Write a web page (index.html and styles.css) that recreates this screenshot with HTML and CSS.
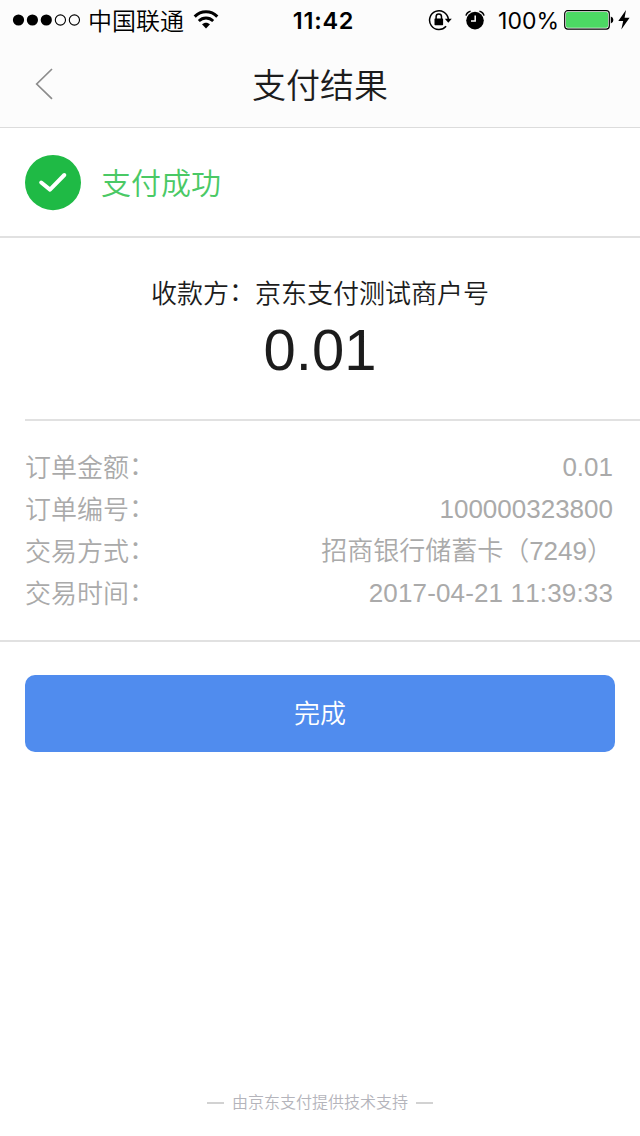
FILE: index.html
```
<!DOCTYPE html>
<html lang="zh-CN">
<head>
  <meta charset="UTF-8">
  <meta name="viewport" content="width=device-width, initial-scale=1.0">
  <title>支付结果</title>
  <link rel="stylesheet" href="styles.css">
</head>
<body>
  <div class="status-bar">
    <div class="status-left">
      <svg class="signal" width="70" height="14" viewBox="0 0 70 14">
        <circle cx="6.5" cy="7" r="5.6"/>
        <circle cx="20.4" cy="7" r="5.6"/>
        <circle cx="34.3" cy="7" r="5.6"/>
        <circle class="empty" cx="48.4" cy="7" r="5.1"/>
        <circle class="empty" cx="62.4" cy="7" r="5.1"/>
      </svg>
      <span class="carrier">中国联通</span>
      <svg class="wifi" width="26" height="20" viewBox="0 0 26 20">
        <path d="M1.7 6.6C8 .2 18 .2 24.3 6.6" fill="none" stroke="#000" stroke-width="3"/>
        <path d="M5.8 11C9.9 7 16.1 7 20.2 11" fill="none" stroke="#000" stroke-width="2.8"/>
        <path d="M9 14.3C11.3 12.1 14.7 12.1 17 14.3L13 18.4Z"/>
      </svg>
    </div>
    <span class="time">11:42</span>
    <div class="status-right">
      <svg class="lock" width="24" height="22" viewBox="0 0 24 22">
        <path d="M18.1 17.3A9.4 9.4 0 1 1 20.3 10" fill="none" stroke="#000" stroke-width="1.5"/>
        <path d="M16.8 9.7H23.8L20.3 13.8Z"/>
        <rect x="6.5" y="9.4" width="8.6" height="6.8" rx=".6"/>
        <path d="M8.1 10V7.8A2.7 2.7 0 0 1 13.5 7.8V10" fill="none" stroke="#000" stroke-width="1.5"/>
      </svg>
      <svg class="alarm" width="20" height="20" viewBox="0 0 20 20">
        <circle cx="10" cy="10.6" r="8.8"/>
        <path d="M1 5.6Q1.7 2.3 5.6 1.3M19 5.6Q18.3 2.3 14.4 1.3" fill="none" stroke="#000" stroke-width="1.5"/>
        <path d="M10.2 5.4V11H6" fill="none" stroke="#fff" stroke-width="1.5"/>
      </svg>
      <span class="percent">100%</span>
      <svg class="battery" width="50" height="20" viewBox="0 0 50 20">
        <rect x=".7" y=".7" width="44.6" height="18.4" rx="3" fill="#fff" stroke="#000" stroke-width="1.2"/>
        <rect x="2" y="2" width="42" height="15.8" rx="1.8" fill="#4cd964"/>
        <path d="M46.8 6.6Q49.4 7.2 49.4 10Q49.4 12.8 46.8 13.4Z"/>
      </svg>
      <svg class="bolt" width="12" height="20" viewBox="0 0 12 20">
        <path d="M8 0L.3 11H5.2L3.3 19.4L11.6 7.8H6.6Z"/>
      </svg>
    </div>
  </div>

  <header class="nav">
    <svg class="back" width="20" height="34" viewBox="0 0 20 34">
      <path d="M17 2L1.7 17L17 31.8" fill="none" stroke="#8c8c8c" stroke-width="1.7"/>
    </svg>
    <h1>支付结果</h1>
  </header>

  <section class="result">
    <svg width="56" height="56" viewBox="0 0 56 56">
      <ellipse cx="28" cy="27.6" rx="28" ry="27.6" fill="#1fba45"/>
      <path d="M16.2 27.5L25 34.6L39.3 20" fill="none" stroke="#fff" stroke-width="4" stroke-linecap="round" stroke-linejoin="round"/>
    </svg>
    <span>支付成功</span>
  </section>

  <section class="payee">
    <p class="payee-name">收款方<i>：</i>京东支付测试商户号</p>
    <p class="amount">0.01</p>
  </section>

  <dl class="detail">
    <div class="row"><dt>订单金额<i>：</i></dt><dd>0.01</dd></div>
    <div class="row"><dt>订单编号<i>：</i></dt><dd>100000323800</dd></div>
    <div class="row"><dt>交易方式<i>：</i></dt><dd>招商银行储蓄卡（7249）</dd></div>
    <div class="row"><dt>交易时间<i>：</i></dt><dd class="date">2017-04-21 11:39:33</dd></div>
  </dl>

  <button class="done" type="button">完成</button>

  <footer class="support">由京东支付提供技术支持</footer>
</body>
</html>
```
FILE: styles.css
```
* {
  box-sizing: border-box;
}

body {
  margin: 0;
  height: 1136px;
  display: flex;
  flex-direction: column;
  overflow: hidden;
  background: #fff;
  color: #1c1c1c;
  font-family: "Liberation Sans", "Noto Sans CJK SC", sans-serif;
  font-weight: 350;
  font-kerning: none;
}

svg {
  display: block;
  flex: none;
}

h1, p, dl, dd {
  margin: 0;
}

/* full-width colon, lifted to the middle of the line */
i {
  font-style: normal;
  line-height: 0;
  vertical-align: 2px;
}

/* status bar */
.status-bar {
  height: 40px;
  display: grid;
  grid-template-columns: 1fr auto 1fr;
  align-items: center;
  background: #fcfcfc;
  color: #000;
  font-family: Inter, "Noto Sans CJK SC", sans-serif;
  font-size: 24px;
  line-height: 40px;
}

.status-left,
.status-right {
  display: flex;
  align-items: center;
}

.status-left {
  padding-left: 12px;
}

.status-right {
  justify-content: flex-end;
  padding-right: 10px;
}

.signal .empty {
  fill: none;
  stroke: #000;
  stroke-width: 1.1;
}

.carrier {
  margin-left: 6px;
  padding-top: 4px;
  line-height: 36px;
}

.wifi {
  margin-left: 9px;
}

.time {
  padding: 2px 0 0 7px;
  font-size: 23.5px;
  font-weight: 600;
  letter-spacing: 0.8px;
  line-height: 38px;
}

.alarm {
  margin-left: 13px;
}

.percent {
  margin-left: 13px;
  padding-top: 2px;
  font-size: 23px;
  font-weight: 400;
  line-height: 38px;
}

.battery {
  margin-left: 5px;
}

.bolt {
  margin-left: 4px;
}

/* title bar */
.nav {
  height: 88px;
  display: grid;
  grid-template-columns: 1fr auto 1fr;
  align-items: center;
  padding: 0 35px;
  background: #fcfcfc;
  border-bottom: 1px solid #dcdcdc;
}

.nav h1 {
  padding-top: 4px;
  font-size: 34px;
  font-weight: 350;
  line-height: 50px;
}

.result {
  height: 110px;
  display: flex;
  align-items: center;
  padding: 1px 0 0 25px;
  gap: 20px;
  border-bottom: 2px solid #e1e1e1;
  color: #4ac965;
  font-size: 30px;
}

.result span {
  padding-bottom: 4px;
}

.payee {
  height: 183px;
  margin-left: 25px;
  padding: 37px 25px 0 0;
  border-bottom: 2px solid #e1e1e1;
  text-align: center;
}

.payee-name {
  font-size: 26px;
  line-height: 38px;
}

.amount {
  font-size: 58px;
  line-height: 74px;
}

/* order details */
.detail {
  height: 221px;
  padding: 25px 27px 0 25px;
  border-bottom: 2px solid #e1e1e1;
  color: #aaa;
  font-size: 26px;
  line-height: 42px;
}

.row {
  height: 42px;
  display: flex;
  justify-content: space-between;
}

.row dt {
  padding-top: 1px;
}

.date {
  letter-spacing: 0.15px;
}

.done {
  height: 77px;
  margin: 33px 25px 0;
  padding: 0 0 4px;
  border: 0;
  border-radius: 10px;
  background: #508cee;
  color: #fff;
  font: inherit;
  font-size: 26px;
}

.support {
  margin-top: auto;
  padding-bottom: 21px;
  display: flex;
  justify-content: center;
  align-items: center;
  gap: 8px;
  color: #b4b4bb;
  font-size: 16px;
  line-height: 24px;
}

.support::before,
.support::after {
  content: "";
  width: 17px;
  height: 2px;
  background: #d2d2d2;
}
```
